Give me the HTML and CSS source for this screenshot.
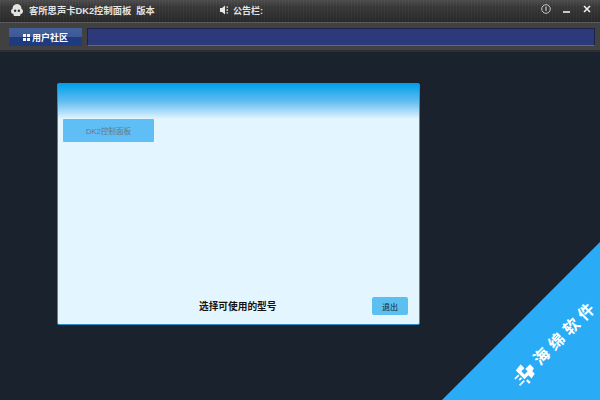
FILE: index.html
```html
<!DOCTYPE html>
<html lang="zh-CN">
<head>
    <meta charset="UTF-8">
    <title>客所思声卡DK2控制面板</title>
    <link rel="stylesheet" href="styles.css">
</head>
<body>
    <header class="titlebar">
        <svg class="logo" width="14" height="12" viewBox="0 0 18 16">
            <path fill="#e4e4e4" d="M9 0C5 0 3 3 3 6.500 1.800 7 1 8 1 9.500 1 11.500 2.500 13 4 13L5 16H13L14 13C15.500 13 17 11.500 17 9.500 17 8 16.200 7 15 6.500 15 3 13 0 9 0Z"/>
            <circle cx="6.500" cy="9" r="1.600" fill="#333"/>
            <circle cx="11.500" cy="9" r="1.600" fill="#333"/>
        </svg>
        <span class="app-title">客所思声卡DK2控制面板</span>
        <span class="app-version">版本</span>
        <div class="notice">
            <svg width="10" height="10" viewBox="0 0 10 10">
                <path fill="#e8e8e8" d="M0 3H2L5 0.500V9.500L2 7H0Z"/>
                <path fill="#e8e8e8" d="M6.500 1.500H8V2.800H6.500ZM6.500 4.300H8V5.700H6.500ZM6.500 7.200H8V8.500H6.500Z"/>
            </svg>
            <span>公告栏:</span>
        </div>
        <div class="window-btns">
            <svg width="10" height="10" viewBox="0 0 10 10">
                <circle cx="5" cy="5" r="4.300" fill="none" stroke="#c8c8c8" stroke-width="1"/>
                <path d="M5 2.500V7" stroke="#c8c8c8" stroke-width="1.200"/>
            </svg>
            <svg width="8" height="8" viewBox="0 0 8 8">
                <path d="M0 7H7" stroke="#eee" stroke-width="1.600"/>
            </svg>
            <svg width="8" height="8" viewBox="0 0 8 8">
                <path d="M1 1L7 7M7 1L1 7" stroke="#eee" stroke-width="1.600"/>
            </svg>
        </div>
    </header>

    <nav class="toolbar">
        <button class="tab">
            <span class="tab-icon"><i></i><i></i><i></i><i></i></span>
            用户社区
        </button>
        <div class="marquee"></div>
    </nav>

    <main class="content">
        <section class="panel">
            <div class="panel-head"></div>
            <button class="model-btn">DK2控制面板</button>
            <div class="panel-foot">
                <span class="panel-msg">选择可使用的型号</span>
                <button class="exit-btn">退出</button>
            </div>
        </section>
    </main>

    <div class="corner">
        <div class="corner-label">
            <svg width="24" height="20" viewBox="0 0 20 18">
                <path fill="#fff" d="M7 1L14 0V5H10V9H14V6H20V11L17 12V15L12 16V12H7Z"/>
                <path fill="#fff" d="M1 5H6V6.500H1ZM3 8.500H6V10H3ZM0 12H6V13.500H0ZM7 14H9V18H7Z"/>
            </svg>
            <span class="corner-text">海绵软<span class="corner-last">件</span></span>
        </div>
    </div>
</body>
</html>
```

FILE: styles.css
```css
html, body {
    margin: 0;
    padding: 0;
}

body {
    width: 600px;
    height: 400px;
    overflow: hidden;
    position: relative;
    background: #1a222d;
    font-family: "Liberation Sans", "Noto Sans CJK SC", sans-serif;
}

.titlebar {
    height: 22px;
    box-sizing: border-box;
    display: flex;
    align-items: center;
    padding: 0 0 2px 10px;
    color: #e4e4e4;
    font-size: 9.300px;
    font-weight: 700;
    background:
        repeating-linear-gradient(90deg, rgba(255, 255, 255, 0.03) 0 1px, transparent 1px 3px),
        linear-gradient(#4d4d4d, #383838 30%, #282828);
}

.logo {
    margin-right: 5px;
}

.app-version {
    margin-left: 5px;
}

.notice {
    display: flex;
    align-items: center;
    gap: 3px;
    margin-left: 65px;
    font-size: 9px;
}

.window-btns {
    margin-left: auto;
    margin-right: 9px;
    display: flex;
    align-items: center;
    gap: 12px;
    margin-top: -3px;
}

.toolbar {
    height: 30px;
    box-sizing: border-box;
    display: flex;
    padding: 5px 5px 4px 9px;
    gap: 5px;
    background: #414141;
    border-top: 1px solid #5a5a5a;
    border-bottom: 2px solid #2c2f33;
}

.tab {
    width: 73px;
    padding: 0;
    border: 0;
    display: flex;
    align-items: center;
    justify-content: center;
    gap: 2px;
    color: #fff;
    font: 700 9px "Liberation Sans", "Noto Sans CJK SC", sans-serif;
    background: linear-gradient(#44609c 0, #3d5a96 50%, #1e3b80 50%, #1e3b80 100%);
}

.tab-icon {
    width: 7px;
    height: 7px;
    display: grid;
    grid-template-columns: 3px 3px;
    gap: 1px;
}

.tab-icon i {
    background: #f4f4f4;
}

.marquee {
    flex: 1;
    background: #2c3a7c;
    border: 1px solid #1c2344;
    border-bottom-color: #5a6692;
}

.content {
    padding: 31px 0 0 57px;
}

.panel {
    width: 363px;
    height: 242px;
    box-sizing: border-box;
    display: flex;
    flex-direction: column;
    border: 1px solid #2a8fc4;
    border-radius: 2px;
    background: #e3f5fe;
}

.panel-head {
    height: 35px;
    flex: none;
    background: linear-gradient(#03a0ea, #62bdf0 50%, #e3f5fe);
}

.model-btn {
    width: 91px;
    height: 23px;
    margin-left: 5px;
    padding: 0;
    border: 0;
    border-radius: 1px;
    background: #5fbef5;
    color: #66788f;
    font: 7.600px "Liberation Sans", "Noto Sans CJK SC", sans-serif;
}

.panel-foot {
    margin-top: auto;
    padding: 0 11px 9px 0;
    display: flex;
    align-items: center;
}

.panel-msg {
    margin-left: 141px;
    font-size: 9.700px;
    font-weight: 700;
    color: #111;
}

.exit-btn {
    width: 36px;
    height: 18px;
    margin-left: auto;
    padding: 0;
    border: 0;
    border-radius: 2px;
    background: #5bc0f0;
    color: #123;
    font: 8px "Liberation Sans", "Noto Sans CJK SC", sans-serif;
}

/* corner ribbon lies over the window */
.corner {
    position: absolute;
    right: 0;
    bottom: 0;
    width: 158px;
    height: 158px;
    background: #29abf6;
    clip-path: polygon(100% 0, 100% 100%, 0 100%);
}

.corner-label {
    position: absolute;
    left: 74px;
    top: 131px;
    height: 20px;
    display: flex;
    align-items: center;
    gap: 5px;
    color: #fff;
    font-size: 16px;
    line-height: 1;
    font-weight: 700;
    letter-spacing: 5px;
    white-space: nowrap;
    transform: rotate(-45deg);
    transform-origin: left center;
}

.corner-last {
    letter-spacing: 0;
}
```
